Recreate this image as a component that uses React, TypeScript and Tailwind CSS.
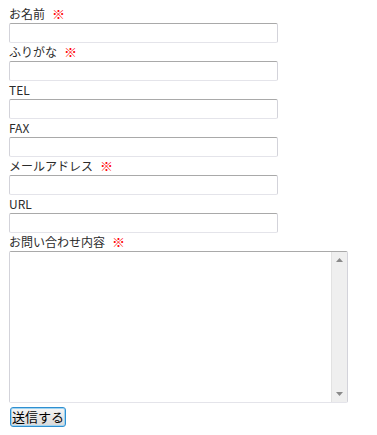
import { FunctionComponent } from "react";

const font = { fontFamily: '"Noto Sans CJK JP", "Liberation Sans", sans-serif' };

interface FieldProps {
    label: string;
    required?: boolean;
}

const Label: FunctionComponent<FieldProps> = ({ label, required }) => (
    <div className="h-[18px] leading-[18px] text-[12px] text-[#2b2b2b]">
        {label}
        {required && <span className="ml-[7px] text-[13px] text-[#ff0000]">※</span>}
    </div>
);

const Field: FunctionComponent<FieldProps> = ({ label, required }) => (
    <div>
        <Label label={label} required={required} />
        <input
            type="text"
            className="block w-[269px] h-[20px] bg-white border border-[#d3d3da] border-t-[#a9a9a9] border-b-[#e4e4ea] rounded-[2px] outline-none px-1 text-[12px]"
        />
    </div>
);

export default function App() {
    return (
        <div className="bg-white w-[377px] h-[435px] pl-[9px] pt-[5px]" style={font}>
            <Field label="お名前" required />
            <Field label="ふりがな" required />
            <Field label="TEL" />
            <Field label="FAX" />
            <Field label="メールアドレス" required />
            <Field label="URL" />
            <Label label="お問い合わせ内容" required />
            <div className="flex w-[339px] h-[152px] border border-[#d3d3da] border-t-[#a9a9a9] border-b-[#e4e4ea] rounded-[2px] bg-white">
                <textarea className="flex-1 resize-none outline-none bg-white text-[12px] p-1 overflow-hidden" />
                <div className="w-[16px] bg-[#efefef] border-l border-[#e2e2e2] flex flex-col items-center justify-between py-[6px]">
                    <svg width="7" height="4" viewBox="0 0 7 4">
                        <path d="M3.5 0 L7 4 L0 4 Z" fill="#8a8a8a" />
                    </svg>
                    <svg width="7" height="4" viewBox="0 0 7 4">
                        <path d="M0 0 L7 0 L3.5 4 Z" fill="#8a8a8a" />
                    </svg>
                </div>
            </div>
            <button
                type="button"
                className="mt-[1px] ml-[1px] h-[20px] px-[1px] text-[13px] leading-[16px] text-black border border-[#2f8fd0] rounded-[3px] bg-gradient-to-b from-[#f6f6f6] to-[#d9d9d9] shadow-[inset_0_0_0_1px_#9fd4f2]"
            >
                送信する
            </button>
        </div>
    );
}
